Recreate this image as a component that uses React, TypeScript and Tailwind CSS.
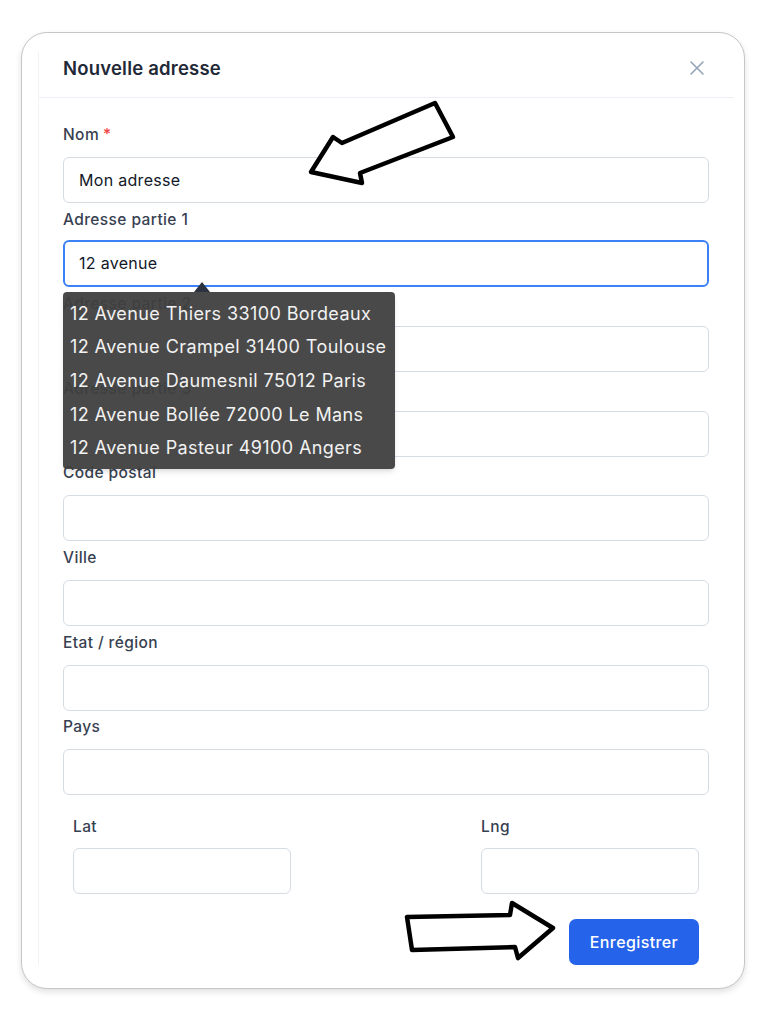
import React from 'react';

const fields = [
  { label: 'Nom', required: true, value: 'Mon adresse' },
  { label: 'Adresse partie 1', value: '12 avenue', focused: true },
  { label: 'Adresse partie 2' },
  { label: 'Adresse partie 3' },
  { label: 'Code postal' },
  { label: 'Ville' },
  { label: 'Etat / région' },
  { label: 'Pays' },
];

const suggestions = [
  '12 Avenue Thiers 33100 Bordeaux',
  '12 Avenue Crampel 31400 Toulouse',
  '12 Avenue Daumesnil 75012 Paris',
  '12 Avenue Bollée 72000 Le Mans',
  '12 Avenue Pasteur 49100 Angers',
];

function Suggestions() {
  return (
    <div className="absolute left-0 top-[52px] z-10 w-[332px] rounded-[4px] bg-[#3f3f3f]/95 pb-[4px] pt-[5px] shadow-md">
      {/* little caret pointing at the input */}
      <div className="absolute -top-[10px] left-[131px] h-0 w-0 border-x-[8px] border-b-[10px] border-x-transparent border-b-[#2b3340]" />
      {suggestions.map((s) => (
        <div key={s} className="px-[7px] text-[18px] leading-[33.7px] tracking-[0.4px] text-[#f2f2f2]">
          {s}
        </div>
      ))}
    </div>
  );
}

function Field({ label, required, value, focused }: { label: string; required?: boolean; value?: string; focused?: boolean }) {
  return (
    <div className="flex flex-col">
      <label className="text-[15.5px] font-medium leading-5 tracking-[0.4px] text-[#374151]">
        {label}
        {required && <span className="ml-1 text-[#ef4444]">*</span>}
      </label>
      <div className={focused ? 'relative mb-[1px] mt-[10px]' : 'relative mt-[12px]'}>
        <div
          className={
            focused
              ? 'flex h-[47px] items-center rounded-[6px] border-2 border-[#3b82f6] px-[14px] text-[16px] tracking-[0.3px] text-[#111827]'
              : 'flex h-[46px] items-center rounded-[6px] border border-[#d5dce6] px-[15px] text-[16px] tracking-[0.3px] text-[#111827]'
          }
        >
          {value}
        </div>
        {focused && <Suggestions />}
      </div>
    </div>
  );
}

function Arrows() {
  return (
    <svg className="pointer-events-none absolute left-0 top-0 z-20" width="778" height="1030" viewBox="0 0 778 1030">
      <polygon
        points="342,143 435,103 453,137 360,173 362,183 311,172 333,137"
        fill="white"
        stroke="black"
        strokeWidth="4.5"
        strokeLinejoin="round"
      />
      <polygon
        points="407,917 510,915 512,903 553,928 518,958 515,947 412,950"
        fill="white"
        stroke="black"
        strokeWidth="4.5"
        strokeLinejoin="round"
      />
    </svg>
  );
}

export default function App() {
  return (
    <div className="relative h-[1030px] w-[778px] bg-white" style={{ fontFamily: 'Inter, "Noto Sans", sans-serif' }}>
      <div className="ml-[21px] pt-[32px]">
        <div className="h-[957px] w-[724px] rounded-[26px] border-[1.5px] border-[#c6c6c6] bg-white shadow-[0_3px_6px_rgba(0,0,0,0.12)]">
          <div className="ml-[16px] mr-[10px] mt-[19px] border-l border-[#f1f3f5]">
            {/* header */}
            <div className="flex h-[46px] items-start justify-between border-b border-[#eceff3] pl-[24px] pr-[29px] pt-[2px]">
              <h2 className="text-[18.5px] font-semibold leading-7 tracking-[0.2px] text-[#1f2937]">Nouvelle adresse</h2>
              <svg className="mt-[6px]" width="16" height="16" viewBox="0 0 16 16" fill="none" stroke="#94a3b8" strokeWidth="1.6" strokeLinecap="round">
                <path d="M2 2l12 12M14 2L2 14" />
              </svg>
            </div>

            {/* form */}
            <div className="pl-[24px] pr-[25px] pt-[27px]">
              <div className="flex flex-col gap-[6.6px]">
                {fields.map((f) => (
                  <Field key={f.label} {...f} />
                ))}
              </div>

              <div className="mt-[22px] flex justify-between px-[10px]">
                {['Lat', 'Lng'].map((l) => (
                  <div key={l} className="flex w-[218px] flex-col">
                    <label className="text-[15.5px] font-medium leading-5 tracking-[0.4px] text-[#374151]">{l}</label>
                    <div className="mt-[11px] h-[46px] rounded-[6px] border border-[#d5dce6]" />
                  </div>
                ))}
              </div>

              <div className="mt-[25px] flex justify-end pr-[10px]">
                <button className="h-[46px] w-[130px] rounded-[7px] bg-[#2563eb] text-[16px] font-medium tracking-[0.4px] text-white">
                  Enregistrer
                </button>
              </div>
            </div>
          </div>
        </div>
      </div>
      <Arrows />
    </div>
  );
}
